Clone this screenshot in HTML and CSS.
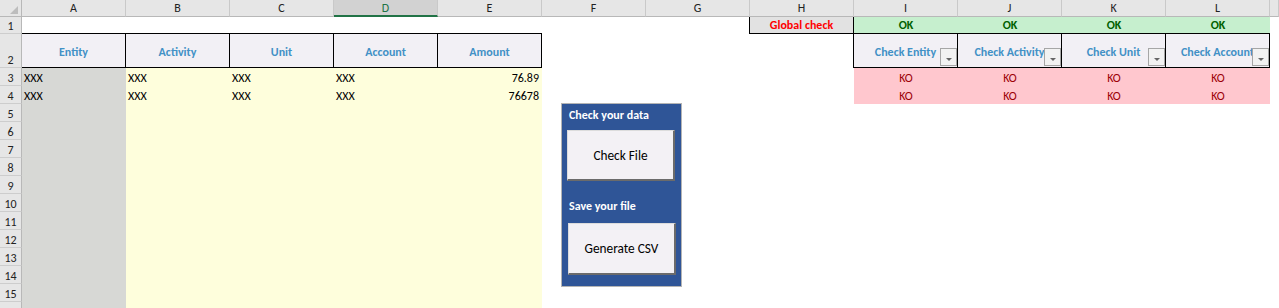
FILE: index.html
```html
<!DOCTYPE html>
<html lang="en">

<head>
    <meta charset="UTF-8">
    <meta name="viewport" content="width=device-width, initial-scale=1.0">
    <title>Data check</title>
    <link rel="stylesheet" href="styles.css">
</head>

<body>
    <div class="sheet">
        <!-- column headers -->
        <div class="row head-row">
            <div class="corner"><span class="tri"></span></div>
            <div class="ch">A</div>
            <div class="ch">B</div>
            <div class="ch">C</div>
            <div class="ch sel">D</div>
            <div class="ch">E</div>
            <div class="ch">F</div>
            <div class="ch">G</div>
            <div class="ch">H</div>
            <div class="ch">I</div>
            <div class="ch">J</div>
            <div class="ch">K</div>
            <div class="ch">L</div>
            <div class="ch"></div>
        </div>

        <!-- row 1 -->
        <div class="row r1">
            <div class="rh">1</div>
            <div class="c span5 bb"></div>
            <div class="c"></div>
            <div class="c br"></div>
            <div class="c gcheck bb br">Global check</div>
            <div class="c ok bb">OK</div>
            <div class="c ok bb">OK</div>
            <div class="c ok bb">OK</div>
            <div class="c ok bb">OK</div>
        </div>

        <!-- row 2 -->
        <div class="row r2">
            <div class="rh">2</div>
            <div class="c hd">Entity</div>
            <div class="c hd">Activity</div>
            <div class="c hd">Unit</div>
            <div class="c hd">Account</div>
            <div class="c hd">Amount</div>
            <div class="c"></div>
            <div class="c"></div>
            <div class="c br"></div>
            <div class="c hd">Check Entity<span class="filter"></span></div>
            <div class="c hd">Check Activity<span class="filter"></span></div>
            <div class="c hd">Check Unit<span class="filter"></span></div>
            <div class="c hd">Check Account<span class="filter"></span></div>
        </div>

        <!-- data rows -->
        <div class="row">
            <div class="rh">3</div>
            <div class="c grey">XXX</div>
            <div class="c yel">XXX</div>
            <div class="c yel">XXX</div>
            <div class="c yel">XXX</div>
            <div class="c yel num">76.89</div>
            <div class="c span3"></div>
            <div class="c ko">KO</div>
            <div class="c ko">KO</div>
            <div class="c ko">KO</div>
            <div class="c ko">KO</div>
        </div>
        <div class="row">
            <div class="rh">4</div>
            <div class="c grey">XXX</div>
            <div class="c yel">XXX</div>
            <div class="c yel">XXX</div>
            <div class="c yel">XXX</div>
            <div class="c yel num">76678</div>
            <div class="c span3"></div>
            <div class="c ko">KO</div>
            <div class="c ko">KO</div>
            <div class="c ko">KO</div>
            <div class="c ko">KO</div>
        </div>
        <div class="row"><div class="rh">5</div><div class="c grey"></div><div class="c yel span4"></div></div>
        <div class="row"><div class="rh">6</div><div class="c grey"></div><div class="c yel span4"></div></div>
        <div class="row"><div class="rh">7</div><div class="c grey"></div><div class="c yel span4"></div></div>
        <div class="row"><div class="rh">8</div><div class="c grey"></div><div class="c yel span4"></div></div>
        <div class="row"><div class="rh">9</div><div class="c grey"></div><div class="c yel span4"></div></div>
        <div class="row"><div class="rh">10</div><div class="c grey"></div><div class="c yel span4"></div></div>
        <div class="row"><div class="rh">11</div><div class="c grey"></div><div class="c yel span4"></div></div>
        <div class="row"><div class="rh">12</div><div class="c grey"></div><div class="c yel span4"></div></div>
        <div class="row"><div class="rh">13</div><div class="c grey"></div><div class="c yel span4"></div></div>
        <div class="row"><div class="rh">14</div><div class="c grey"></div><div class="c yel span4"></div></div>
        <div class="row"><div class="rh">15</div><div class="c grey"></div><div class="c yel span4"></div></div>
        <div class="row"><div class="rh"></div><div class="c grey"></div><div class="c yel span4"></div></div>

        <!-- macro panel floating over the cells -->
        <div class="panel">
            <p class="panel-label">Check your data</p>
            <button class="panel-btn">Check File</button>
            <p class="panel-label second">Save your file</p>
            <button class="panel-btn last">Generate CSV</button>
        </div>
    </div>
</body>

</html>
```

FILE: styles.css
```css
* {
    margin: 0;
    padding: 0;
    box-sizing: border-box;
}

body {
    background-color: #fff;
    font-family: Carlito, Lato, "Liberation Sans", sans-serif;
    font-size: 12px;
    color: #000;
    overflow: hidden;
}

.sheet {
    position: relative;
    height: 308px;
    overflow: hidden;
}

.row {
    display: grid;
    grid-template-columns: 22px repeat(12, 104px) 1fr;
    height: 18px;
}

.head-row {
    height: 17px;
    background-color: #e6e6e6;
}

.r1 {
    height: 17px;
}

.r2 {
    height: 34px;
}

/* headers */
.corner {
    position: relative;
    border-right: 1px solid #b8b8b8;
    border-bottom: 1px solid #b8b8b8;
}

.corner .tri {
    position: absolute;
    right: 3px;
    bottom: 2px;
    border-left: 8px solid transparent;
    border-bottom: 8px solid #bdbdbd;
}

.ch {
    display: flex;
    align-items: center;
    justify-content: center;
    border-right: 1px solid #c9c9c9;
    border-bottom: 1px solid #b8b8b8;
    font-size: 12px;
    color: #222;
}

.ch.sel {
    background-color: #d2d2d2;
    color: #217346;
    border-bottom: 2px solid #217346;
}

.rh {
    display: flex;
    align-items: flex-end;
    justify-content: center;
    background-color: #e6e6e6;
    border-right: 1px solid #b8b8b8;
    border-bottom: 1px solid #cdcdcd;
    font-size: 12px;
    line-height: 14px;
    color: #222;
}

/* cells */
.c {
    display: flex;
    align-items: flex-end;
    padding: 0 2px;
    line-height: 15px;
    white-space: nowrap;
    overflow: hidden;
}

.span3 {
    grid-column: span 3;
}

.span4 {
    grid-column: span 4;
}

.span5 {
    grid-column: span 5;
}

.bb {
    border-bottom: 1px solid #000;
}

.br {
    border-right: 1px solid #000;
}

.grey {
    background-color: #d7d8d5;
}

.yel {
    background-color: #fefedc;
}

.num {
    justify-content: flex-end;
    padding-right: 3px;
}

.gcheck {
    justify-content: center;
    background-color: #e2e2e2;
    color: #ff0000;
    font-weight: bold;
}

.ok {
    justify-content: center;
    background-color: #c6efce;
    color: #006100;
    font-weight: bold;
}

.ko {
    justify-content: center;
    background-color: #ffc7ce;
    color: #9c0006;
}

.hd {
    position: relative;
    align-items: center;
    justify-content: center;
    padding-top: 3px;
    background-color: #f2f0f5;
    border-right: 1px solid #000;
    border-bottom: 1px solid #000;
    color: #4291c6;
    font-weight: bold;
}

.filter {
    position: absolute;
    right: 0;
    bottom: 1px;
    width: 17px;
    height: 18px;
    display: flex;
    align-items: center;
    justify-content: center;
    background-color: #f2f2f2;
    border: 1px solid #a6a6a6;
}

.filter::after {
    content: "";
    margin-top: 4px;
    border-left: 3px solid transparent;
    border-right: 3px solid transparent;
    border-top: 3px solid #666;
}

/* macro panel */
.panel {
    position: absolute;
    left: 561px;
    top: 103px;
    width: 121px;
    height: 184px;
    display: flex;
    flex-direction: column;
    padding: 4px 0 0 5px;
    background-color: #2f5597;
    border: 1px solid #b4b4b4;
}

.panel-label {
    padding-left: 2px;
    line-height: 14px;
    color: #fff;
    font-weight: bold;
}

.panel-label.second {
    margin-top: 18px;
}

.panel-btn {
    width: 108px;
    height: 51px;
    margin-top: 8px;
    background-color: #f3f1f5;
    border: 1px solid #dcdcdc;
    border-right: 2px solid #6b6b6b;
    border-bottom: 2px solid #6b6b6b;
    font-family: inherit;
    font-size: 13.3px;
    color: #000;
}

.panel-btn.last {
    height: 52px;
    margin-top: 10px;
    margin-left: 1px;
}
```
